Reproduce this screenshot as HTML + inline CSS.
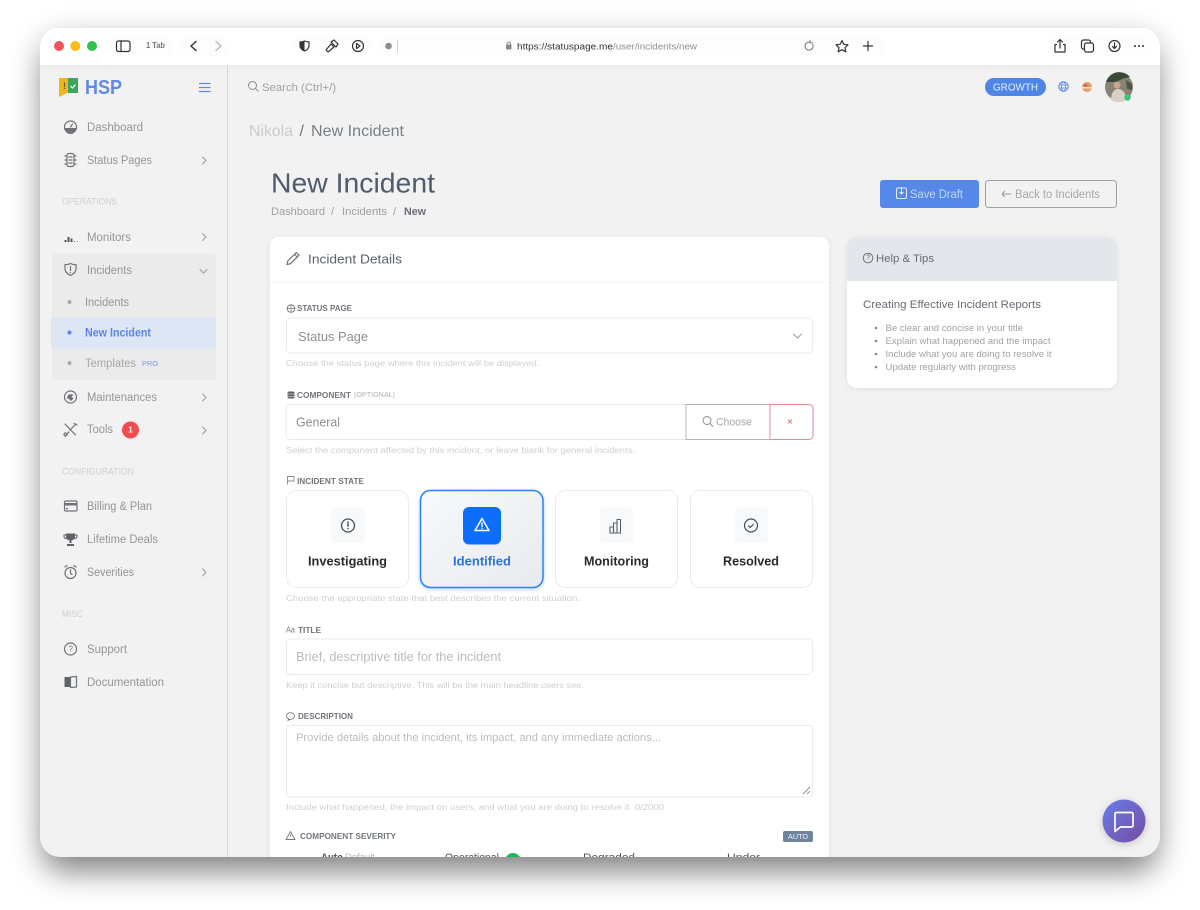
<!DOCTYPE html>
<html lang="en"><head><meta charset="utf-8"><title>New Incident</title>
<style>
html,body{margin:0;padding:0;width:1200px;height:910px;background:#fff;overflow:hidden}
#win{position:absolute;left:40px;top:27px;width:1120px;height:830px;border-radius:20px;background:#f2f2f2;box-shadow:0 20px 32px -6px rgba(0,0,0,.42),0 6px 30px rgba(0,0,0,.17)}
svg{position:absolute;left:0;top:0;filter:blur(.3px)}
text{font-family:"Liberation Sans",sans-serif;dominant-baseline:central;white-space:pre}
.n{transform:translateY(.8px)}
.m{font-size:11.5px;fill:#959595;transform:translateY(.8px)}
.h{font-size:9px;fill:#cfcfcf}
.s{font-size:8.5px;fill:#cfcfcf}
.l{font-size:8.5px;fill:#72767b;font-weight:bold}
.i{font-size:13px;fill:#8e8e8e}
.c{font-size:13px;fill:#2a2a2a;font-weight:bold}
.b{font-size:9px;fill:#a2a2a2}
.ic{fill:none;stroke:#6f7378;stroke-width:1.2;stroke-linecap:round;stroke-linejoin:round}
.ch{fill:none;stroke:#9a9a9a;stroke-width:1;stroke-linecap:round;stroke-linejoin:round}
.tb{fill:none;stroke:#333;stroke-width:1.2;stroke-linecap:round;stroke-linejoin:round}
.bx{fill:#fff;stroke:#ebebeb;stroke-width:1}
</style></head><body>
<div id="win"></div>
<svg width="1200" height="910" viewBox="0 0 1200 910" xmlns="http://www.w3.org/2000/svg">
<defs>
<clipPath id="w"><rect x="40" y="27" width="1120" height="830" rx="20"/></clipPath>
<linearGradient id="sel" x1="0" y1="0" x2="1" y2="1"><stop offset="0" stop-color="#f8f9fa"/><stop offset="1" stop-color="#e7eaee"/></linearGradient>
<linearGradient id="chat" x1="0" y1="0" x2="1" y2="1"><stop offset="0" stop-color="#667eea"/><stop offset="1" stop-color="#764ba2"/></linearGradient>
<linearGradient id="tbs" x1="0" y1="0" x2="0" y2="1"><stop offset="0" stop-color="#ededed"/><stop offset="1" stop-color="#f2f2f2"/></linearGradient>
<filter id="sf" x="-20%" y="-20%" width="140%" height="150%"><feDropShadow dx="0" dy="1" stdDeviation="3" flood-color="#000" flood-opacity=".07"/></filter>
<filter id="sf2" x="-20%" y="-20%" width="140%" height="140%"><feDropShadow dx="0" dy="1" stdDeviation="2" flood-color="#1f6fe0" flood-opacity=".3"/></filter>
<filter id="sf3" x="-30%" y="-30%" width="160%" height="160%"><feDropShadow dx="0" dy="2" stdDeviation="4" flood-color="#000" flood-opacity=".18"/></filter>
</defs>
<g clip-path="url(#w)">
<!-- toolbar -->
<rect x="40" y="27" width="1120" height="38" fill="#fff"/>
<rect x="40" y="65" width="1120" height="7" fill="url(#tbs)"/>
<rect x="40" y="27" width="1120" height="1" fill="#e6e6e6"/>
<g fill="#fdfdfd"><rect x="109" y="36" width="65" height="20" rx="10"/><rect x="180" y="36" width="51" height="20" rx="10"/><rect x="293" y="36" width="78" height="20" rx="10"/><rect x="380" y="36" width="505" height="20" rx="10"/><rect x="1048" y="36" width="104" height="20" rx="10"/></g>
<circle cx="59" cy="46" r="5" fill="#f0545a"/><circle cx="75.3" cy="46" r="5" fill="#f9bc12"/><circle cx="92" cy="46" r="5" fill="#35c24a"/>
<rect x="116.5" y="41" width="13.5" height="10.5" rx="2" class="tb"/><path d="M121 41v10.500" class="tb"/>
<text x="146" y="45.500" textLength="19" lengthAdjust="spacingAndGlyphs" style="font-size:8px;font-weight:bold;fill:#777">1 Tab</text>
<path d="M196 41.500l-5 4.500 5 4.500" fill="none" stroke="#333" stroke-width="1.500" stroke-linecap="round" stroke-linejoin="round"/>
<path d="M216 41.500l5 4.500-5 4.500" fill="none" stroke="#b5b5b5" stroke-width="1.300" stroke-linecap="round" stroke-linejoin="round"/>
<path d="M304.500 41c1.500.7 3 1 4.500 1v3.500c0 2.800-2 4.500-4.500 5.500-2.500-1-4.500-2.700-4.500-5.500V42c1.500 0 3-.3 4.500-1z" class="tb"/><path d="M304.500 41c-1.500.7-3 1-4.500 1v3.500c0 2.800 2 4.500 4.500 5.500z" fill="#333"/>
<path d="M326 50l5-6 3 3-6 5zM331 42l3-2 4 4-2 3zM333 44l1 1" class="tb"/>
<circle cx="358" cy="46" r="5.500" class="tb"/><path d="M356.500 43.500l3.500 2.500-3.500 2.500z" class="tb"/>
<circle cx="388.500" cy="46" r="3.300" fill="#8e8e8e"/><rect x="397" y="40" width="1" height="13" fill="#d5d5d5"/>
<rect x="506" y="44.500" width="5.500" height="5" rx="1" fill="#8a8a8a"/><path d="M507 45v-1.500a1.800 1.800 0 0 1 3.500 0V45" fill="none" stroke="#8a8a8a"/>
<text x="517" y="47" textLength="96" lengthAdjust="spacingAndGlyphs" style="font-size:9.500px;fill:#333">https://statuspage.me</text>
<text x="613" y="47" textLength="84" lengthAdjust="spacingAndGlyphs" style="font-size:9.500px;fill:#909090">/user/incidents/new</text>
<path d="M812.500 44a4 4 0 1 1-2.500-1.800M810 40.500v2.200h2.200" fill="none" stroke="#777" stroke-width="1" stroke-linecap="round"/>
<path d="M842 40.500l1.800 3.800 4.200.5-3 2.900.8 4.100-3.800-2.100-3.800 2.100.8-4.100-3-2.900 4.200-.5z" class="tb"/>
<path d="M868 41.500v9M863.500 46h9" class="tb" stroke-width="1.300"/>
<path d="M1057 44.500h-1.500v7.500h10v-7.500H1064M1060.500 48v-8M1058 42l2.500-2.500L1063 42" class="tb" transform="translate(-.5 0)"/>
<rect x="1081.500" y="40" width="9" height="9" rx="2" class="tb"/><rect x="1084.500" y="43" width="9" height="9" rx="2" fill="#fff" stroke="#333" stroke-width="1.200"/>
<circle cx="1114.500" cy="46" r="5.500" class="tb"/><path d="M1114.500 43v5.500M1112.500 46.500l2 2 2-2" class="tb"/>
<circle cx="1135" cy="46" r="1" fill="#333"/><circle cx="1139" cy="46" r="1" fill="#333"/><circle cx="1143" cy="46" r="1" fill="#333"/>

<!-- sidebar -->
<rect x="227" y="65" width="1" height="792" fill="#d6d6d6"/>
<path d="M59 78h10v14l-3 1.500-7 3.500z" fill="#f0b71a"/><rect x="68" y="78" width="10" height="15" fill="#3ba55c"/>
<text x="63" y="86" style="font-size:9px;font-weight:bold;fill:#7a5500">!</text>
<path d="M70.500 86l2 2 3-3.500" fill="none" stroke="#fff" stroke-width="1.200"/>
<text x="85" y="88" textLength="37" lengthAdjust="spacingAndGlyphs" style="font-size:20px;font-weight:bold;fill:#5f8ae6">HSP</text>
<path d="M199 83.500h11.500M199 87.500h11.500M199 91.500h11.500" stroke="#5f8ae6" stroke-width="1.300" fill="none"/>

<rect x="52" y="254" width="164" height="126" rx="3" fill="#ebebeb"/>
<rect x="51" y="317.500" width="165" height="31" fill="#dde6f5"/>

<g class="icons">
<circle cx="70.500" cy="127" r="6" class="ic"/><path d="M64.500 128h12a6 6 0 0 1-12 0z" fill="#6f7378"/><path d="M70.500 127l2-3" class="ic"/>
<rect x="67" y="153.500" width="7" height="13" rx="2" class="ic"/><path d="M65 156h2M65 160h2M65 164h2M74 156h2M74 160h2M74 164h2M69 157h3M69 160h3M69 163h3" class="ic" stroke-width="1"/>
<path d="M64.500 240h2v2h-2zM67.500 237h2v5h-2zM70.500 238.500h2v3.500h-2z" fill="#555"/><path d="M74 241.500h1M77 241.500h.5" stroke="#555" stroke-width="1"/>
<path d="M70.500 263.500c2 1 4 1.200 5.500 1.200v4.300c0 3-2.500 5-5.500 6.500-3-1.500-5.500-3.500-5.500-6.500v-4.300c1.500 0 3.500-.2 5.500-1.200zM70.500 266.500v4M70.500 272.500v.2" class="ic"/>
<circle cx="70.500" cy="397" r="6" class="ic"/><path d="M67 398a4 4 0 0 1 6.500-3l-2 1.500 2 2-2.500 2.500-2-2z" fill="#6f7378"/>
<path d="M65 424l10.500 11M76 424l-6 6M66 435l3-3" class="ic" stroke-width="1.700"/><circle cx="65.500" cy="434.500" r="1.500" class="ic"/><path d="M74 423.500l3 1.500" class="ic" stroke-width="1.700"/>
<rect x="64.500" y="501" width="12.500" height="10" rx="1.200" class="ic"/><rect x="64.500" y="503" width="12.500" height="2.500" fill="#6f7378"/><rect x="66" y="508" width="2" height="1.300" fill="#6f7378"/>
<path d="M66 533.500h9v3c0 2.500-2 4-4.500 4s-4.500-1.500-4.500-4z" fill="#5f6368"/><path d="M66 535h-2v1c0 1.500 1 2.500 2.500 2.500M75 535h2v1c0 1.500-1 2.500-2.500 2.500" class="ic"/><path d="M70.500 540v3M67 545h7" stroke="#5f6368" stroke-width="2"/>
<circle cx="70.500" cy="573" r="5.500" class="ic"/><path d="M70.500 570v3.500l1.500 1M65 567l2-1.500M76 567l-2-1.500" class="ic"/>
<circle cx="70.500" cy="649" r="6" class="ic"/><text x="68.500" y="649" style="font-size:8px;fill:#6f7378">?</text>
<path d="M64.500 677h6v10h-6z" fill="#5f6368"/><path d="M70.500 677l6-.500v10.500l-6 .500z" class="ic"/>
</g>
<text x="87" y="127" class="m" textLength="56" lengthAdjust="spacingAndGlyphs">Dashboard</text>
<text x="87" y="160" class="m" textLength="65" lengthAdjust="spacingAndGlyphs">Status Pages</text>
<text x="62" y="201.500" class="h" textLength="55" lengthAdjust="spacingAndGlyphs">OPERATIONS</text>
<text x="87" y="237" class="m" textLength="44" lengthAdjust="spacingAndGlyphs">Monitors</text>
<text x="87" y="270" class="m" textLength="45" lengthAdjust="spacingAndGlyphs">Incidents</text>
<circle cx="69.500" cy="302" r="2" fill="#aaa"/><circle cx="69.500" cy="332.500" r="2" fill="#5d84e4"/><circle cx="69.500" cy="363" r="2" fill="#aaa"/>
<text x="85" y="302" class="m" textLength="44" lengthAdjust="spacingAndGlyphs">Incidents</text>
<text x="85" y="332.500" class="n" textLength="66" lengthAdjust="spacingAndGlyphs" style="font-size:11.500px;font-weight:bold;fill:#5d84e4">New Incident</text>
<text x="85" y="363" class="m" textLength="51" lengthAdjust="spacingAndGlyphs" style="fill:#a8a8a8">Templates</text>
<text x="142" y="363.500" textLength="16" lengthAdjust="spacingAndGlyphs" style="font-size:7.500px;fill:#7c9ce8">PRO</text>
<text x="87" y="397" class="m" textLength="70" lengthAdjust="spacingAndGlyphs">Maintenances</text>
<text x="87" y="429" class="m" textLength="26" lengthAdjust="spacingAndGlyphs">Tools</text>
<circle cx="130.500" cy="430" r="8.500" fill="#f44b4f"/><text x="130.500" y="430" text-anchor="middle" style="font-size:8px;fill:#fff;font-weight:bold">1</text>
<text x="62" y="471.500" class="h" textLength="72" lengthAdjust="spacingAndGlyphs">CONFIGURATION</text>
<text x="87" y="506" class="m" textLength="65" lengthAdjust="spacingAndGlyphs">Billing &amp; Plan</text>
<text x="87" y="539" class="m" textLength="71" lengthAdjust="spacingAndGlyphs">Lifetime Deals</text>
<text x="87" y="572" class="m" textLength="47" lengthAdjust="spacingAndGlyphs">Severities</text>
<text x="62" y="614" class="h" textLength="21" lengthAdjust="spacingAndGlyphs">MISC</text>
<text x="87" y="649" class="m" textLength="40" lengthAdjust="spacingAndGlyphs">Support</text>
<text x="87" y="682" class="m" textLength="77" lengthAdjust="spacingAndGlyphs">Documentation</text>
<path d="M202.500 157l3.500 3.500-3.500 3.500M202.500 233.500l3.500 3.500-3.500 3.500M202.500 394l3.500 3.500-3.500 3.500M202.500 427l3.500 3.500-3.500 3.500M202.500 569l3.500 3.500-3.500 3.500M200 269.500l3.500 3.500 3.500-3.500" class="ch"/>

<!-- top nav -->
<circle cx="252.500" cy="85.500" r="4" fill="none" stroke="#8a8a8a"/><path d="M255.500 88.500l3 3" stroke="#8a8a8a"/>
<text x="262" y="87" class="n" textLength="74" lengthAdjust="spacingAndGlyphs" style="font-size:11px;fill:#a0a0a0">Search (Ctrl+/)</text>
<rect x="985" y="78" width="61" height="18" rx="9" fill="#4f86e6"/>
<text x="993" y="87" class="n" textLength="45" lengthAdjust="spacingAndGlyphs" style="font-size:10px;fill:#e8effc">GROWTH</text>
<circle cx="1063.500" cy="86.500" r="4.700" fill="none" stroke="#4f86e6"/><ellipse cx="1063.500" cy="86.500" rx="2" ry="4.700" fill="none" stroke="#4f86e6" stroke-width=".8"/><path d="M1059 85h9M1059 88h9" stroke="#4f86e6" stroke-width=".8"/>
<circle cx="1087" cy="87" r="5" fill="#e89a60"/><circle cx="1085.500" cy="85.500" r="1.800" fill="#c86a50"/><rect x="1082" y="87" width="10" height="1.500" fill="#f6e4d0"/>
<circle cx="1119" cy="87" r="14" fill="#8a8373"/>
<path d="M1106 82a14 14 0 0 1 24-5l-8 2-6 3z" fill="#3a4a38"/><circle cx="1117" cy="85" r="3.500" fill="#c9a68c"/><path d="M1111 100c0-7 3-11 7-11s8 3 8 11a14 14 0 0 1-15 0z" fill="#d8cfc7"/><path d="M1126 80l6 4v6l-5-1z" fill="#4a5a44"/>
<circle cx="1127.500" cy="97.500" r="3.200" fill="#30c878"/>

<!-- heading -->
<text x="249" y="131.500" textLength="44" lengthAdjust="spacingAndGlyphs" style="font-size:16px;fill:#cbcbcb">Nikola</text>
<text x="299.500" y="131.500" style="font-size:16px;fill:#6f757c">/</text>
<text x="311" y="131.500" textLength="93" lengthAdjust="spacingAndGlyphs" style="font-size:16px;fill:#7a8088">New Incident</text>
<text x="271" y="183" textLength="164" lengthAdjust="spacingAndGlyphs" style="font-size:28px;fill:#4e5c6b">New Incident</text>
<g class="n" style="font-size:11px;fill:#a0a0a0"><text x="271" y="211" textLength="54" lengthAdjust="spacingAndGlyphs">Dashboard</text><text x="331" y="211">/</text><text x="342" y="211" textLength="45" lengthAdjust="spacingAndGlyphs">Incidents</text><text x="393" y="211">/</text></g>
<text x="404" y="211" class="n" textLength="22" lengthAdjust="spacingAndGlyphs" style="font-size:11px;font-weight:bold;fill:#6a6f75">New</text>
<rect x="880" y="180" width="99" height="28" rx="3" fill="#5588e8"/>
<rect x="896.500" y="188" width="10" height="10.500" rx="1.500" fill="none" stroke="#e5edfb"/><path d="M901.500 187v7M899.500 192l2 2 2-2" fill="none" stroke="#e5edfb"/>
<text x="910" y="194" class="n" textLength="53" lengthAdjust="spacingAndGlyphs" style="font-size:11.500px;fill:#c5d6f7">Save Draft</text>
<rect x="985.500" y="180.500" width="131" height="27" rx="3" fill="none" stroke="#9ca2a9"/>
<path d="M1002 194h9M1002 194l3-3M1002 194l3 3" fill="none" stroke="#9a9a9a"/>
<text x="1015" y="194" class="n" textLength="85" lengthAdjust="spacingAndGlyphs" style="font-size:11.500px;fill:#a6a6a6">Back to Incidents</text>

<!-- main card -->
<rect x="270" y="237" width="559" height="640" rx="9" fill="#fff" filter="url(#sf)"/>
<rect x="270" y="282" width="559" height="1" fill="#f5f5f5"/>
<path d="M287 264.500l.8-3.500 8.500-8.500 2.700 2.700-8.500 8.500zM294.500 254.300l2.700 2.700" class="ic"/>
<text x="308" y="259" textLength="94" lengthAdjust="spacingAndGlyphs" style="font-size:13px;fill:#5a626b">Incident Details</text>

<circle cx="291" cy="308.500" r="3.800" fill="none" stroke="#777"/><path d="M287.500 308.500h7M291 305v7" stroke="#777" stroke-width=".7"/>
<text x="297" y="308" class="l" textLength="55" lengthAdjust="spacingAndGlyphs">STATUS PAGE</text>
<rect x="286.500" y="318" width="526" height="35" rx="4" class="bx"/>
<text x="298" y="336.500" class="i" textLength="70" lengthAdjust="spacingAndGlyphs">Status Page</text>
<path d="M793.500 334l4 4 4-4" class="ch"/>
<text x="286" y="363" class="s" textLength="253" lengthAdjust="spacingAndGlyphs">Choose the status page where this incident will be displayed.</text>

<rect x="287.500" y="391.500" width="7" height="7" rx="1.500" fill="#5f6368"/><path d="M287.500 394h7M287.500 396.500h7" stroke="#fff" stroke-width=".6"/>
<text x="297" y="395" class="l" textLength="54" lengthAdjust="spacingAndGlyphs">COMPONENT</text>
<text x="354" y="395.500" textLength="41" lengthAdjust="spacingAndGlyphs" style="font-size:7px;fill:#b0b0b0">(OPTIONAL)</text>
<path d="M686 404.500h-396a4 4 0 0 0-4 4v27a4 4 0 0 0 4 4h396z" class="bx"/>
<text x="296" y="422" class="i" textLength="44" lengthAdjust="spacingAndGlyphs">General</text>
<rect x="686" y="404.500" width="84" height="35" fill="#fff" stroke="#b4b4b4"/>
<circle cx="707" cy="420.500" r="4" fill="none" stroke="#8f8f8f"/><path d="M710 423.500l3 3" stroke="#8f8f8f"/>
<text x="716" y="421.500" class="n" textLength="36" lengthAdjust="spacingAndGlyphs" style="font-size:11px;fill:#a6a6a6">Choose</text>
<path d="M770 404.500h39a4 4 0 0 1 4 4v27a4 4 0 0 1-4 4h-39z" fill="#fff" stroke="#e58a8d"/>
<path d="M788 419.500l4 4M792 419.500l-4 4" stroke="#e47a7e" fill="none"/>
<text x="286" y="450" class="s" textLength="349" lengthAdjust="spacingAndGlyphs">Select the component affected by this incident, or leave blank for general incidents.</text>

<path d="M287.500 484.500v-8h6.500v4.500h-6.500" fill="none" stroke="#888" stroke-width=".9"/>
<text x="297" y="481" class="l" textLength="67" lengthAdjust="spacingAndGlyphs">INCIDENT STATE</text>
<rect x="286.500" y="490.500" width="122" height="97" rx="10" class="bx"/>
<rect x="420.500" y="490.500" width="122.500" height="97" rx="10" fill="url(#sel)" stroke="#2f83ee" stroke-width="1.500" filter="url(#sf2)"/>
<rect x="555.500" y="490.500" width="122" height="97" rx="10" class="bx"/>
<rect x="690.500" y="490.500" width="122" height="97" rx="10" class="bx"/>
<rect x="331" y="507" width="34" height="36" rx="6" fill="#f8f9fa"/>
<rect x="463" y="507" width="38" height="37.500" rx="6" fill="#0d6efd"/>
<rect x="599.500" y="507" width="34" height="36" rx="6" fill="#f8f9fa"/>
<rect x="734.500" y="507" width="34" height="36" rx="6" fill="#f8f9fa"/>
<circle cx="348" cy="525.500" r="6.500" fill="none" stroke="#4a4f55" stroke-width="1.300"/><path d="M348 522v4.200M348 528.500v.3" stroke="#4a4f55" stroke-width="1.400" stroke-linecap="round"/>
<path d="M482 518.500l7 12h-14z" fill="none" stroke="#fff" stroke-width="1.500" stroke-linejoin="round"/><path d="M482 523v3.500M482 528.300v.3" stroke="#fff" stroke-width="1.400" stroke-linecap="round"/>
<path d="M610 527h3.500v6H610zM613.500 523h3.500v10h-3.500zM617 519.500h3.500V533H617z" fill="none" stroke="#5a5f65" stroke-width="1.100" stroke-linejoin="round"/>
<circle cx="751" cy="525.500" r="6.500" fill="none" stroke="#4a4f55" stroke-width="1.200"/><path d="M748.200 525.500l2 2 3.500-3.500" fill="none" stroke="#4a4f55" stroke-width="1.200"/>
<text x="308" y="561" class="c" textLength="79" lengthAdjust="spacingAndGlyphs">Investigating</text>
<text x="453" y="561" class="c" textLength="58" lengthAdjust="spacingAndGlyphs" style="fill:#2b72dc">Identified</text>
<text x="584" y="561" class="c" textLength="65" lengthAdjust="spacingAndGlyphs">Monitoring</text>
<text x="723" y="561" class="c" textLength="56" lengthAdjust="spacingAndGlyphs">Resolved</text>
<text x="286" y="598" class="s" textLength="294" lengthAdjust="spacingAndGlyphs">Choose the appropriate state that best describes the current situation.</text>

<text x="286" y="630" textLength="9" lengthAdjust="spacingAndGlyphs" style="font-size:8px;fill:#777">Aa</text>
<text x="298" y="630" class="l" textLength="23" lengthAdjust="spacingAndGlyphs">TITLE</text>
<rect x="286.500" y="639" width="526" height="35.500" rx="4" class="bx"/>
<text x="296" y="657" textLength="205" lengthAdjust="spacingAndGlyphs" style="font-size:12.500px;fill:#bcbcbc">Brief, descriptive title for the incident</text>
<text x="286" y="685" class="s" textLength="298" lengthAdjust="spacingAndGlyphs">Keep it concise but descriptive. This will be the main headline users see.</text>

<ellipse cx="290.500" cy="716" rx="4" ry="3.300" fill="none" stroke="#777" stroke-width=".9"/><path d="M288.500 719l-.5 1.500 2-1" fill="none" stroke="#777" stroke-width=".8"/><path d="M288.800 716h.5M290.300 716h.5M291.800 716h.5" stroke="#777" stroke-width=".8"/>
<text x="298" y="716" class="l" textLength="55" lengthAdjust="spacingAndGlyphs">DESCRIPTION</text>
<rect x="286.500" y="725.500" width="526" height="71.500" rx="3" class="bx"/>
<text x="296" y="738" textLength="365" lengthAdjust="spacingAndGlyphs" style="font-size:11px;fill:#bcbcbc">Provide details about the incident, its impact, and any immediate actions...</text>
<path d="M803 794l7-7M807 794l3-3" stroke="#777" stroke-width=".8"/>
<text x="286" y="807" class="s" textLength="378" lengthAdjust="spacingAndGlyphs">Include what happened, the impact on users, and what you are doing to resolve it  0/2000</text>

<path d="M290.500 831.500l4.500 8h-9z" fill="none" stroke="#777" stroke-width=".9" stroke-linejoin="round"/><path d="M290.500 834.500v2.500M290.500 838v.2" stroke="#777" stroke-width=".8"/>
<text x="300" y="836" class="l" textLength="96" lengthAdjust="spacingAndGlyphs">COMPONENT SEVERITY</text>
<rect x="783" y="831" width="30" height="11" rx="2" fill="#6d85a1"/>
<text x="788" y="836.500" textLength="20" lengthAdjust="spacingAndGlyphs" style="font-size:7.500px;fill:#f0f3f7">AUTO</text>
<text x="321" y="858" textLength="22" lengthAdjust="spacingAndGlyphs" style="font-size:11px;font-weight:bold;fill:#555">Auto</text>
<text x="345" y="858" textLength="30" lengthAdjust="spacingAndGlyphs" style="font-size:10px;fill:#b5b5b5">Default</text>
<text x="445" y="858" textLength="54" lengthAdjust="spacingAndGlyphs" style="font-size:11px;fill:#555">Operational</text>
<circle cx="513" cy="861" r="8" fill="#18b85a"/>
<text x="583" y="858" textLength="52" lengthAdjust="spacingAndGlyphs" style="font-size:11px;fill:#555">Degraded</text>
<text x="727" y="858" textLength="33" lengthAdjust="spacingAndGlyphs" style="font-size:11px;fill:#555">Under</text>

<!-- help card -->
<rect x="847" y="237" width="270" height="151" rx="10" fill="#fff" filter="url(#sf)"/>
<path d="M847 281v-34a10 10 0 0 1 10-10h250a10 10 0 0 1 10 10v34z" fill="#e3e7eb"/>
<circle cx="868" cy="258" r="4.800" fill="none" stroke="#666" stroke-width=".9"/><text x="866.300" y="258" style="font-size:7px;fill:#666">?</text>
<text x="876" y="258" class="n" textLength="58" lengthAdjust="spacingAndGlyphs" style="font-size:11px;fill:#666c73">Help &amp; Tips</text>
<text x="863" y="304" class="n" textLength="178" lengthAdjust="spacingAndGlyphs" style="font-size:11px;fill:#666c73">Creating Effective Incident Reports</text>
<g fill="#888"><circle cx="876" cy="328" r="1.300"/><circle cx="876" cy="341" r="1.300"/><circle cx="876" cy="354" r="1.300"/><circle cx="876" cy="367" r="1.300"/></g>
<text x="885.500" y="328" class="b" textLength="137.500" lengthAdjust="spacingAndGlyphs">Be clear and concise in your title</text>
<text x="885.500" y="341" class="b" textLength="165" lengthAdjust="spacingAndGlyphs">Explain what happened and the impact</text>
<text x="885.500" y="354" class="b" textLength="166" lengthAdjust="spacingAndGlyphs">Include what you are doing to resolve it</text>
<text x="885.500" y="367" class="b" textLength="130.500" lengthAdjust="spacingAndGlyphs">Update regularly with progress</text>

<!-- chat -->
<circle cx="1124" cy="821" r="21.500" fill="url(#chat)" filter="url(#sf3)"/>
<path d="M1116 812.500h15.500a1.500 1.500 0 0 1 1.500 1.500v11.500a1.500 1.500 0 0 1-1.500 1.500h-11l-5.500 4.500V814a1.500 1.500 0 0 1 1-1.500z" fill="none" stroke="#fff" stroke-width="1.700" stroke-linejoin="round"/>
</g>
</svg>
</body></html>
